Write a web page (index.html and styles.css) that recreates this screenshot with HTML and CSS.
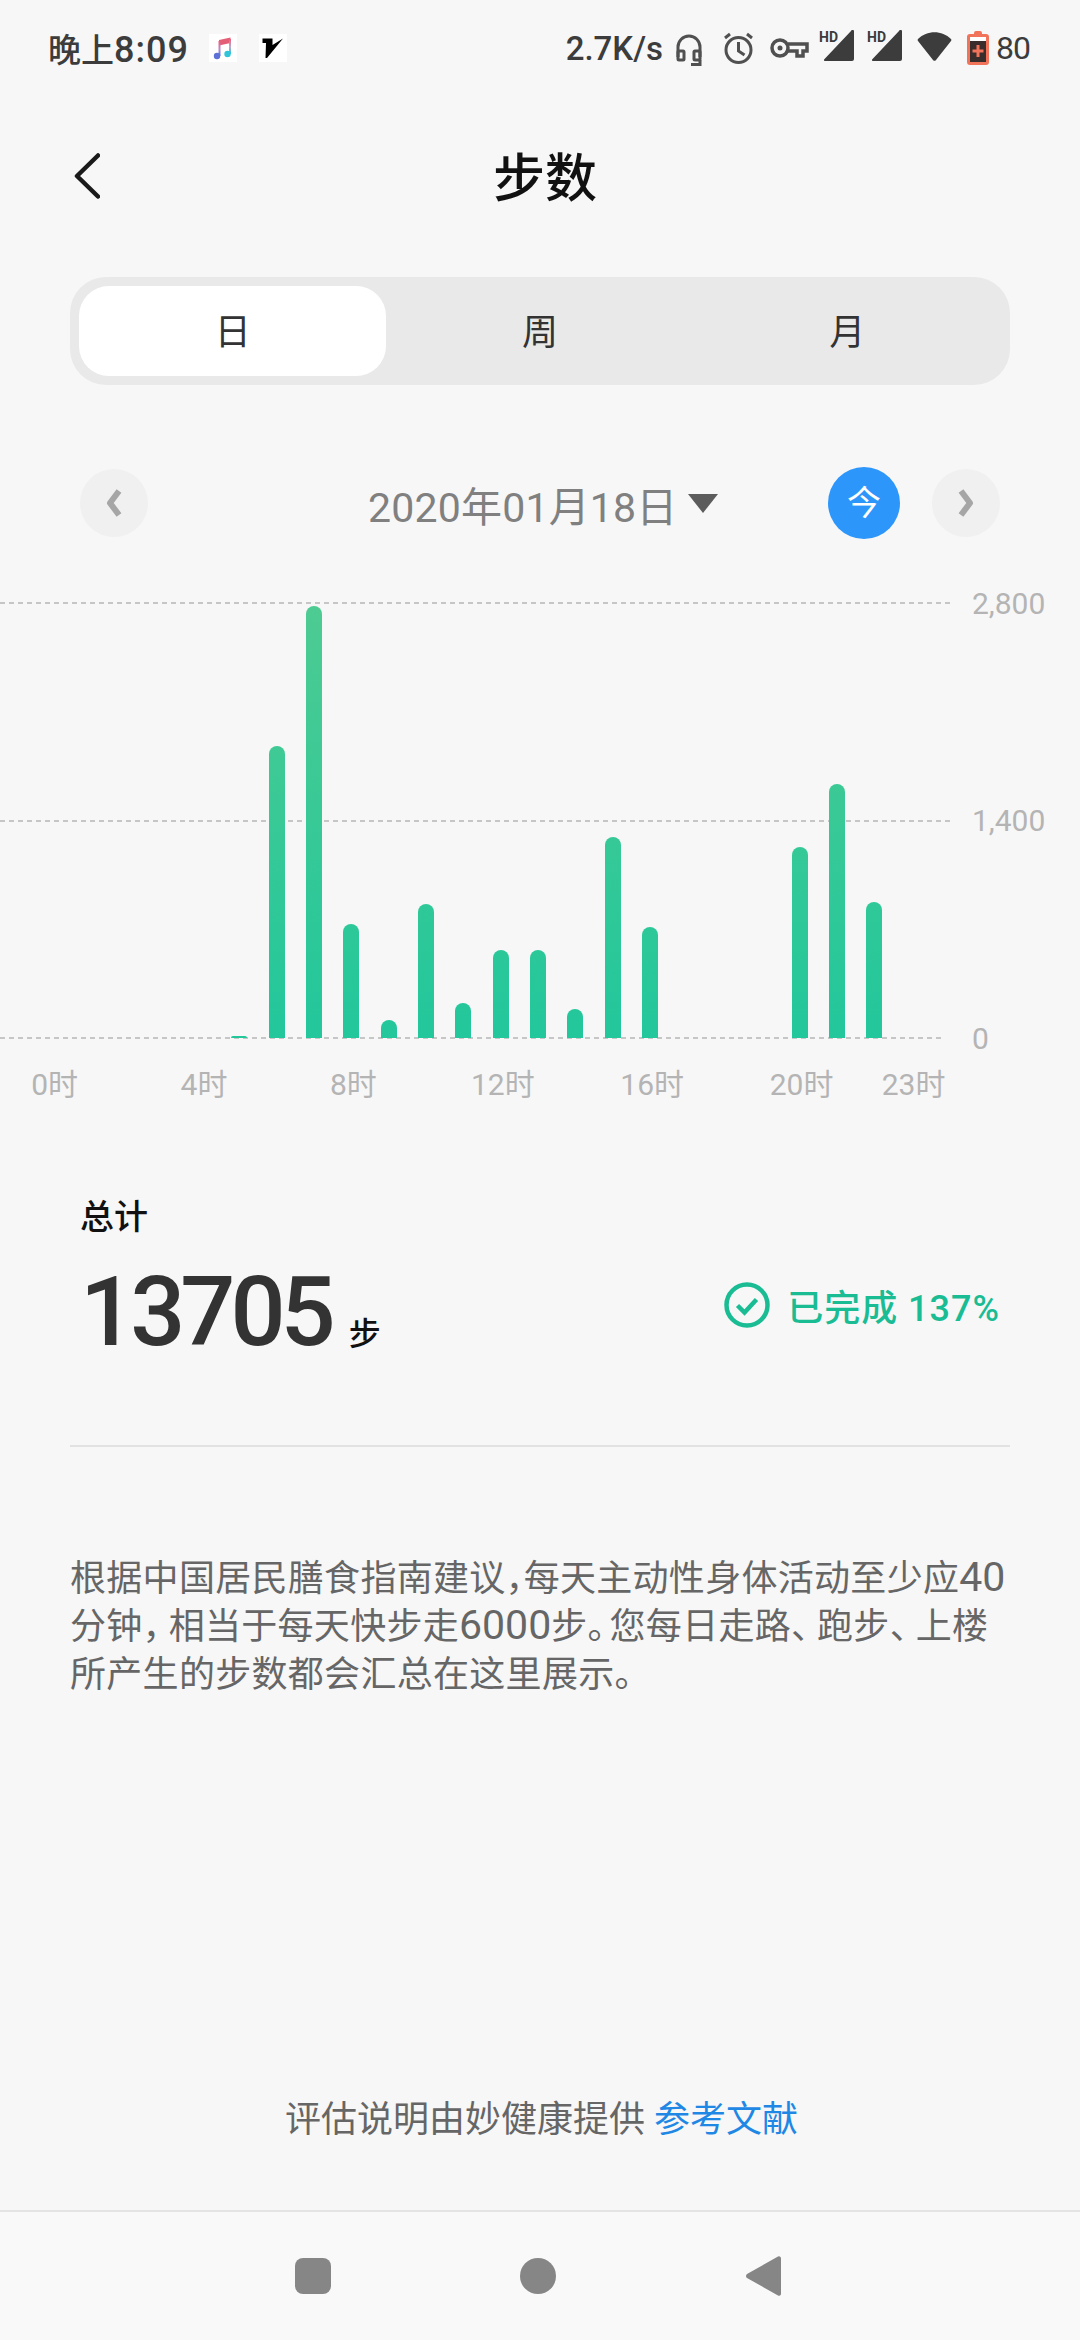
FILE: index.html
```html
<!DOCTYPE html>
<html lang="zh-CN">
<head>
  <meta charset="UTF-8" />
  <meta name="viewport" content="width=device-width, initial-scale=1.0"/>
  <title>步数</title>
  <link rel="stylesheet" href="styles.css">
</head>
<body>
  <div class="page">
    <div class="status-bar">
      <div class="status-left">
        <span class="status-time">晚上<span class="status-digits">8:09</span></span>
        <svg class="app-icon" viewBox="0 0 28 28">
          <defs>
            <linearGradient id="note" x1="0" y1="0" x2="0" y2="1">
              <stop offset="0" stop-color="#e8607a"/>
              <stop offset="0.55" stop-color="#b98ad0"/>
              <stop offset="1" stop-color="#5a78d8"/>
            </linearGradient>
            <linearGradient id="note2" x1="0" y1="0" x2="0" y2="1">
              <stop offset="0" stop-color="#e8607a"/>
              <stop offset="0.5" stop-color="#c0a8d0"/>
              <stop offset="1" stop-color="#30c4d8"/>
            </linearGradient>
          </defs>
          <rect width="28" height="28" fill="#fff"/>
          <path d="M10 6l11.500-2.500v5.500l-11.500 2.500z" fill="#e45f76"/>
          <rect x="9.500" y="7" width="2" height="15" fill="url(#note)"/>
          <rect x="20" y="5" width="2" height="15" fill="url(#note2)"/>
          <circle cx="8" cy="22" r="3.200" fill="#5c70d8"/>
          <circle cx="18.500" cy="20" r="3.200" fill="#30c4d8"/>
        </svg>
        <svg class="app-icon app-icon-v" viewBox="0 0 28 28">
          <rect width="28" height="28" fill="#fff"/>
          <path d="M3.500 4.500h10v6.500l10.500-6.500L8 24H6.500l.5-15H3.500z" fill="#000"/>
        </svg>
      </div>
      <div class="status-right">
        <span class="net-speed">2.7K/s</span>
        <svg class="ico-head" viewBox="0 0 26 32" fill="none" stroke="#505050" stroke-width="3">
          <path d="M2 23V13a11 11 0 0 1 22 0v10"/>
          <rect x="2" y="17" width="6" height="9" rx="1"/>
          <rect x="18" y="17" width="6" height="9" rx="1"/>
          <path d="M24 26v4.500h-9"/>
        </svg>
        <svg class="ico-alarm" viewBox="0 0 31 32" fill="none" stroke="#505050" stroke-width="3">
          <circle cx="15.500" cy="18" r="12.500"/>
          <path d="M15.500 10v9l6 4"/>
          <path d="M2 6l5-4M29 6l-5-4"/>
        </svg>
        <svg class="ico-key" viewBox="0 0 39 20" fill="none" stroke="#505050" stroke-width="3.500">
          <circle cx="10" cy="10" r="8"/>
          <path d="M18 6h19v7h-4v5h-6v-5h-9"/>
          <circle cx="10" cy="10" r="2.500" fill="#505050" stroke="none"/>
        </svg>
        <div class="signals">
          <svg class="ico-signal" viewBox="0 0 35 32">
            <path d="M32 1a1.500 1.500 0 0 1 3 1v27a2 2 0 0 1-2 2H6a1 1 0 0 1-.700-1.700z" fill="#3c3c3c"/>
            <text x="0" y="12" class="hd-text">HD</text>
          </svg>
          <svg class="ico-signal" viewBox="0 0 35 32">
            <path d="M32 1a1.500 1.500 0 0 1 3 1v27a2 2 0 0 1-2 2H6a1 1 0 0 1-.700-1.700z" fill="#3c3c3c"/>
            <text x="0" y="12" class="hd-text">HD</text>
          </svg>
        </div>
        <svg class="ico-wifi" viewBox="0 0 35 32">
          <path d="M1 9C10 0 25 0 34 9a1.500 1.500 0 0 1 0 2L19 30a2 2 0 0 1-3 0L1 11a1.500 1.500 0 0 1 0-2z" fill="#3c3c3c"/>
        </svg>
        <svg class="ico-batt" viewBox="0 0 22 34">
          <path d="M7 2a2 2 0 0 1 2-2h4a2 2 0 0 1 2 2v1h4a3 3 0 0 1 3 3v25a3 3 0 0 1-3 3H3a3 3 0 0 1-3-3V6a3 3 0 0 1 3-3h4z" fill="#f0735a"/>
          <rect x="3" y="6" width="16" height="4" fill="#fff"/>
          <rect x="3" y="10" width="16" height="21" fill="#3a2e2c"/>
          <path d="M11 14v12M5.500 20h11" stroke="#f0735a" stroke-width="3"/>
        </svg>
        <span class="batt-level">80</span>
      </div>
    </div>

    <div class="header">
      <svg class="back" viewBox="0 0 26 46" fill="none" stroke="#1a1a1a" stroke-width="4.500" stroke-linecap="round" stroke-linejoin="round">
        <path d="M24 2.500L3 23l21 20.500"/>
      </svg>
      <div class="title">步数</div>
    </div>

    <div class="segment">
      <div class="seg-item active">日</div>
      <div class="seg-item">周</div>
      <div class="seg-item">月</div>
    </div>

    <div class="date-row">
      <div class="round-btn">
        <svg viewBox="0 0 18 28" fill="none" stroke="#a6a6a6" stroke-width="6" stroke-linejoin="round"><path d="M14 2L5 14l9 12"/></svg>
      </div>
      <div class="date-pick">
        <span class="date-text">2020年01月18日</span>
        <span class="caret"></span>
      </div>
      <div class="today">今</div>
      <div class="round-btn">
        <svg viewBox="0 0 18 28" fill="none" stroke="#a6a6a6" stroke-width="6" stroke-linejoin="round"><path d="M4 2l9 12-9 12"/></svg>
      </div>
    </div>

    <div class="chart">
      <div class="ticks">
        <div class="tick"><div class="tick-line"></div><span class="tick-label">2,800</span></div>
        <div class="tick"><div class="tick-line"></div><span class="tick-label">1,400</span></div>
        <div class="tick tick-base"><div class="tick-line"></div><span class="tick-label">0</span></div>
      </div>
      <div class="bars">
        <div></div><div></div><div></div><div></div><div></div>
        <div class="bar" style="height:2px"></div>
        <div class="bar" style="height:292px"></div>
        <div class="bar" style="height:432px"></div>
        <div class="bar" style="height:114px"></div>
        <div class="bar" style="height:18px"></div>
        <div class="bar" style="height:134px"></div>
        <div class="bar" style="height:35px"></div>
        <div class="bar" style="height:88px"></div>
        <div class="bar" style="height:88px"></div>
        <div class="bar" style="height:29px"></div>
        <div class="bar" style="height:201px"></div>
        <div class="bar" style="height:111px"></div>
        <div></div><div></div><div></div>
        <div class="bar" style="height:191px"></div>
        <div class="bar" style="height:254px"></div>
        <div class="bar" style="height:136px"></div>
        <div></div>
      </div>
    </div>

    <div class="hours">
      <span>0时</span><span></span><span></span><span></span>
      <span>4时</span><span></span><span></span><span></span>
      <span>8时</span><span></span><span></span><span></span>
      <span>12时</span><span></span><span></span><span></span>
      <span>16时</span><span></span><span></span><span></span>
      <span>20时</span><span></span><span></span>
      <span>23时</span>
    </div>

    <div class="summary">
      <div class="summary-label">总计</div>
      <div class="summary-row">
        <div class="steps">
          <span class="steps-num">13705</span>
          <span class="steps-unit">步</span>
        </div>
        <div class="done">
          <svg class="done-icon" viewBox="0 0 46 46" fill="none" stroke="#1abc94" stroke-width="4.500">
            <circle cx="23" cy="23" r="20.500"/>
            <path d="M13.500 23.500l7 7 12-13" stroke-width="4.500"/>
          </svg>
          <span>已完成 137%</span>
        </div>
      </div>
    </div>

    <div class="divider"></div>

    <p class="intro">根据中国居民膳食指南建议<span class="p-tight">，</span>每天主动性身体活动至少应<span class="num">40</span><br>分钟<span class="p-mid">，</span>相当于每天快步走<span class="num">6000</span>步<span class="p-stop">。</span>您每日走路<span class="p-mid">、</span>跑步<span class="p-mid">、</span>上楼<br>所产生的步数都会汇总在这里展示。</p>

    <div class="source">评估说明由妙健康提供 <a class="source-link">参考文献</a></div>

    <div class="nav-bar">
      <div class="nav-square"></div>
      <div class="nav-circle"></div>
      <svg class="nav-back" viewBox="0 0 36 42">
        <path d="M33 1.500a2 2 0 0 1 3 1.500v36a2 2 0 0 1-3 1.500L2 23a2.500 2.500 0 0 1 0-4z" fill="#868686"/>
      </svg>
    </div>
  </div>
</body>
</html>
```

FILE: styles.css
```css
html, body {
  margin: 0;
  padding: 0;
  background-color: #f7f7f7;
  font-family: Roboto, "Noto Sans CJK SC", sans-serif;
}

.page {
  width: 1080px;
  height: 2340px;
  display: flex;
  flex-direction: column;
  overflow: hidden;
}

/* status bar */
.status-bar {
  height: 96px;
  display: flex;
  align-items: center;
  justify-content: space-between;
  padding: 0 50px 0 48px;
  color: #3c3c3c;
  flex-shrink: 0;
}

.status-left, .status-right {
  display: flex;
  align-items: center;
}

.status-time {
  font-size: 33px;
  font-weight: 500;
}

.status-digits {
  font-size: 36px;
  letter-spacing: 1px;
}

.app-icon {
  width: 28px;
  height: 28px;
  margin-left: 20px;
}

.app-icon-v {
  margin-left: 22px;
}

.net-speed {
  font-size: 33px;
  font-weight: 500;
}

.batt-level {
  font-size: 32px;
  letter-spacing: -1px;
  margin-left: 7px;
}

.ico-head {
  width: 26px;
  height: 32px;
  margin-left: 13px;
  margin-top: 4px;
}

.ico-alarm {
  width: 31px;
  height: 32px;
  margin-left: 21px;
}

.ico-key {
  width: 39px;
  height: 20px;
  margin-left: 16px;
}

.signals {
  display: flex;
  gap: 13px;
  margin-left: 10px;
}

.ico-signal {
  width: 35px;
  height: 32px;
  margin-top: -5px;
}

.hd-text {
  font-family: Roboto, sans-serif;
  font-size: 14px;
  font-weight: 700;
  fill: #3c3c3c;
}

.ico-wifi {
  width: 35px;
  height: 32px;
  margin-left: 15px;
  margin-top: -5px;
}

.ico-batt {
  width: 22px;
  height: 34px;
  margin-left: 15px;
  margin-top: -1px;
}

/* title */
.header {
  height: 157px;
  padding: 0 62px 3px 72px;
  display: flex;
  align-items: center;
  justify-content: center;
  position: relative;
  flex-shrink: 0;
}

.back {
  position: absolute;
  left: 74px;
  top: 57px;
  width: 26px;
  height: 46px;
}

.title {
  font-size: 52px;
  font-weight: 500;
  color: #111;
}

/* day / week / month */
.segment {
  width: 922px;
  margin: 21px 0 0 70px;
  padding: 9px;
  background-color: #e9e9e9;
  border-radius: 36px;
  display: flex;
  flex-shrink: 0;
}

.seg-item {
  flex: 1;
  height: 90px;
  line-height: 95px;
  text-align: center;
  font-size: 36px;
  color: #333;
  border-radius: 30px;
}

.seg-item.active {
  background-color: #fff;
}

/* date picker */
.date-row {
  display: flex;
  align-items: center;
  height: 72px;
  margin-top: 82px;
  padding: 0 80px;
  flex-shrink: 0;
}

.round-btn {
  width: 68px;
  height: 68px;
  border-radius: 50%;
  background-color: #f0f0f0;
  display: flex;
  align-items: center;
  justify-content: center;
}

.round-btn svg {
  width: 18px;
  height: 28px;
}

.date-pick {
  display: flex;
  align-items: center;
  margin-left: 220px;
}

.date-text {
  padding-top: 2px;
  font-size: 41px;
  letter-spacing: 0.2px;
  color: #808080;
}

.caret {
  width: 0;
  height: 0;
  margin-left: 10px;
  border-left: 15px solid transparent;
  border-right: 15px solid transparent;
  border-top: 19px solid #5c5c5c;
}

.today {
  width: 72px;
  height: 72px;
  line-height: 72px;
  margin-left: auto;
  margin-right: 32px;
  border-radius: 50%;
  background-color: #2d96fb;
  color: #fff;
  font-size: 34px;
  text-align: center;
}

/* chart */
.chart {
  position: relative;
  margin-top: 44px;
  flex-shrink: 0;
}

.ticks {
  height: 475px;
  display: flex;
  flex-direction: column;
  justify-content: space-between;
}

.tick {
  height: 40px;
  display: flex;
  align-items: center;
}

.tick-line {
  width: 952px;
  height: 2px;
  background-image: repeating-linear-gradient(to right, #c6c6c6 0, #c6c6c6 5px, transparent 5px, transparent 9px);
}

.tick-base .tick-line {
  width: 942px;
}

.tick-base .tick-label {
  margin-left: 30px;
}

.tick-label {
  margin-left: 20px;
  font-size: 30px;
  color: #b4b4b4;
}

.bars {
  position: absolute;
  left: 34px;
  bottom: 20px;
  display: grid;
  grid-template-columns: repeat(24, 37.35px);
  align-items: end;
  height: 435px;
}

.bar {
  width: 16px;
  justify-self: center;
  border-radius: 8px 8px 0 0;
  background-image: linear-gradient(to bottom, #4dcb92, #22c79b);
  background-size: 100% 432px;
  background-position: bottom;
}

.hours {
  display: grid;
  grid-template-columns: repeat(24, 37.35px);
  margin: 7px 0 0 36px;
  height: 40px;
  flex-shrink: 0;
}

.hours span {
  display: flex;
  justify-content: center;
  white-space: nowrap;
  font-size: 30px;
  line-height: 40px;
  color: #b4b4b4;
}

/* totals */
.summary {
  margin-top: 89px;
  padding: 0 80px;
  flex-shrink: 0;
}

.summary-label {
  font-size: 34px;
  line-height: 46px;
  font-weight: 500;
  color: #111;
}

.summary-row {
  display: flex;
  align-items: center;
  justify-content: space-between;
  margin-top: 17px;
}

.steps {
  display: flex;
  align-items: baseline;
}

.steps-num {
  font-size: 97px;
  line-height: 110px;
  font-weight: 500;
  letter-spacing: -5px;
  color: #333;
}

.steps-unit {
  margin-left: 18px;
  font-size: 32px;
  font-weight: 500;
  color: #111;
}

.done {
  display: flex;
  align-items: center;
  gap: 17px;
  margin-bottom: 14px;
  font-size: 36px;
  font-weight: 500;
  letter-spacing: 1px;
  color: #1abc94;
}

.done-icon {
  width: 46px;
  height: 46px;
}

.divider {
  height: 2px;
  margin: 78px 70px 0;
  background-color: #e2e2e2;
  flex-shrink: 0;
}

.intro {
  margin: 108px 0 0 70px;
  font-size: 36px;
  line-height: 48px;
  letter-spacing: 0.3px;
  color: #666;
  white-space: nowrap;
}

.intro .num {
  font-size: 41px;
  line-height: 40px;
  letter-spacing: 0;
}

/* punctuation in the reference is set narrower than a full cell */
.p-tight {
  letter-spacing: -18px;
}

.p-mid {
  letter-spacing: -10px;
}

.p-stop {
  letter-spacing: -14px;
}

.source {
  margin-top: auto;
  margin-bottom: 66px;
  padding-left: 285px;
  font-size: 36px;
  line-height: 48px;
  color: #666;
}

.source-link {
  color: #1f88e5;
}

/* bottom nav */
.nav-bar {
  height: 128px;
  border-top: 2px solid #e4e4e4;
  background-color: #f9f9f9;
  position: relative;
  flex-shrink: 0;
  display: flex;
  align-items: center;
  padding-left: 295px;
}

.nav-square {
  width: 36px;
  height: 36px;
  border-radius: 8px;
  background-color: #868686;
}

.nav-circle {
  width: 36px;
  height: 36px;
  margin-left: 189px;
  border-radius: 50%;
  background-color: #868686;
}

.nav-back {
  width: 36px;
  height: 42px;
  margin-left: 189px;
}
```
